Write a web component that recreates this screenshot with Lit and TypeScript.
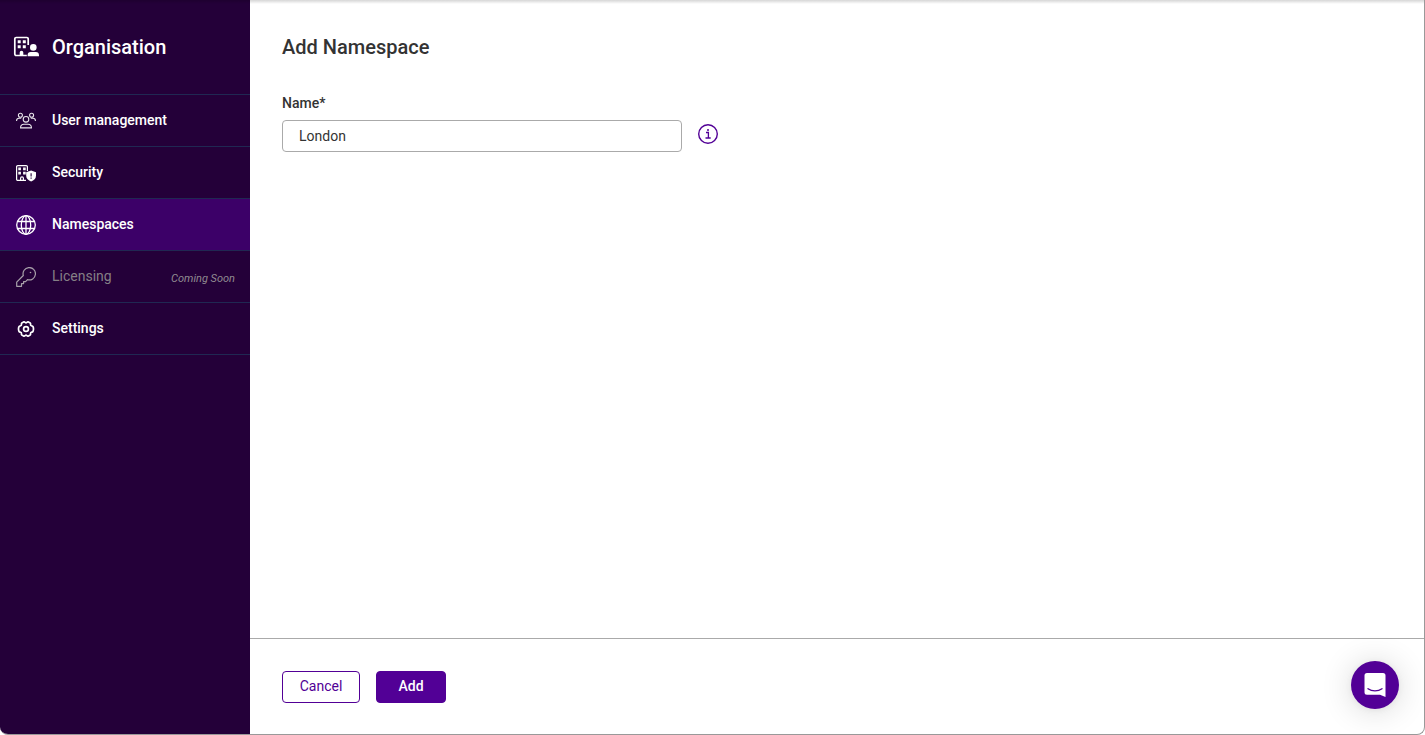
import { LitElement, html, css, svg, nothing } from "lit";
import { customElement, state } from "lit/decorators.js";
import { classMap } from "lit/directives/class-map.js";

const icons = {
  organisation: svg`
    <path d="M8 20.5H3.2a1.4 1.4 0 0 1-1.400-1.400V3.900a1.400 1.400 0 0 1 1.400-1.400h10.600a1.400 1.400 0 0 1 1.400 1.400V10M13.800 20.500H8" fill="none" stroke="currentColor" stroke-width="1.700"/>
    <path d="M4.700 5.200h3v3h-3zM9.800 5.200h3v3h-3zM4.700 10.200h3v3h-3zM9.800 10.200h3v3h-3zM6.700 20.500v-3a1.800 1.800 0 0 1 3.600 0v3z" fill="currentColor"/>
    <circle cx="20.300" cy="12.400" r="3.300" fill="currentColor"/>
    <path d="M14.600 21.300v-1.100a3.200 3.200 0 0 1 3.200-3.100h5a3.200 3.200 0 0 1 3.200 3.100v1.100z" fill="currentColor"/>`,
  users: svg`
    <g fill="none" stroke="currentColor" stroke-width="1.100" opacity="0.9">
      <circle cx="4.400" cy="4.200" r="2"/><circle cx="15.600" cy="4.200" r="2"/>
      <circle cx="10" cy="8.300" r="2.800"/>
      <path d="M.6 10V9.500a2.300 2.300 0 0 1 2.300-2.200h2.300M19.400 10V9.500a2.300 2.300 0 0 0-2.300-2.200h-2.300"/>
      <path d="M4.600 16.900v-.6a3.300 3.300 0 0 1 3.300-3.100h4.200a3.300 3.300 0 0 1 3.300 3.100v.6z"/>
    </g>`,
  security: svg`
    <g fill="none" stroke="currentColor" stroke-width="1.200">
      <path d="M10 17.400H1.800A1.200 1.200 0 0 1 .6 16.200V3.800A1.200 1.200 0 0 1 1.800 2.600h8.400a1.200 1.200 0 0 1 1.200 1.200V8"/>
      <path d="M2.900 5.200h1.400v1.400H2.900zM7.700 5.200h1.400v1.400H7.700zM2.900 9.400h1.400v1.400H2.900zM7.700 9.400h1.400v1.400H7.700zM4.600 17.400v-2.200a1.400 1.400 0 0 1 2.800 0v2.200"/>
    </g>
    <path d="M15.100 7.600l4.900 1.600v3.500c0 2.700-2 4.600-4.900 5.800-2.900-1.200-4.900-3.100-4.900-5.800V9.200z" fill="currentColor"/>
    <path d="M15.100 10.200v3.400M15.100 14.600v1.200" stroke="#240039" stroke-width="1.100"/>`,
  globe: svg`
    <g fill="none" stroke="currentColor" stroke-width="1.300">
      <circle cx="10" cy="10" r="9.300"/><ellipse cx="10" cy="10" rx="4.700" ry="9.300"/>
      <path d="M10 .7v18.600"/>
      <path d="M1.400 6.500h17.200M1.400 13.500h17.200"/>
    </g>`,
  key: svg`
    <path d="M.7 19.300v-4.200L7.300 8.500A6.200 6.200 0 1 1 11.500 12.700L9.600 14.600H7.600v2H5.500v2.700z" fill="none" stroke="currentColor" stroke-width="1.200" stroke-linejoin="round"/>
    <circle cx="14.500" cy="5.500" r=".8" fill="currentColor"/>`,
  gear: svg`
    <path d="M8 2.800Q8.700 2.800 9.200 3.500Q10 4.300 10.800 3.500Q11.300 2.800 12 2.800L14.200 3.900Q14.800 4.300 14.500 5.200Q14.300 6.600 15.700 6.900Q16.700 7 17 7.700Q17.500 8.800 17.500 10Q17.500 11.200 17 12.300Q16.700 13 15.700 13.100Q14.300 13.400 14.500 14.800Q14.800 15.700 14.200 16.100L12 17.200Q11.300 17.200 10.800 16.500Q10 15.700 9.200 16.500Q8.700 17.200 8 17.200L5.800 16.100Q5.200 15.700 5.500 14.800Q5.700 13.400 4.300 13.100Q3.300 13 3 12.300Q2.500 11.200 2.500 10Q2.500 8.800 3 7.700Q3.300 7 4.300 6.900Q5.700 6.600 5.500 5.200Q5.200 4.300 5.800 3.900Z" fill="none" stroke="currentColor" stroke-width="1.700" stroke-linejoin="round"/>
    <circle cx="10" cy="10" r="2.400" fill="none" stroke="currentColor" stroke-width="1.700"/>`,
};

type NavItem = { label: string; icon: keyof typeof icons; active?: boolean; note?: string };

const navItems: NavItem[] = [
  { label: "User management", icon: "users" },
  { label: "Security", icon: "security" },
  { label: "Namespaces", icon: "globe", active: true },
  { label: "Licensing", icon: "key", note: "Coming Soon" },
  { label: "Settings", icon: "gear" },
];

@customElement("app-sidebar")
export class AppSidebar extends LitElement {
  static styles = css`
    :host {
      display: block;
      background: #240039;
      color: #fff;
    }
    .brand {
      display: flex;
      align-items: center;
      gap: 11px;
      height: 94px;
      padding-left: 13px;
      box-sizing: border-box;
    }
    .brand svg { width: 28px; height: 24px; }
    .brand h2 { margin: 0; font-size: 20px; line-height: 24px; font-weight: 500; }
    ul { list-style: none; margin: 0; padding: 0; border-bottom: 1px solid #202852; }
    .item {
      display: flex;
      align-items: center;
      gap: 16px;
      height: 52px;
      box-sizing: border-box;
      border-top: 1px solid #202852;
      padding: 0 15px 2px 16px;
      color: #fff;
      font-size: 14px;
      line-height: 20px;
      font-weight: 500;
      text-decoration: none;
    }
    .item svg { width: 20px; height: 20px; margin-top: 2px; }
    .active { background: #3c0068; }
    .disabled { color: #857f85; font-weight: 400; }
    .disabled svg { color: #a8a0aa; }
    .note { margin: 6px 0 0 auto; font-size: 11px; font-style: italic; color: #918b91; }
  `;

  render() {
    return html`
      <header class="brand">
        <svg viewBox="0 0 28 24" aria-hidden="true">${icons.organisation}</svg>
        <h2>Organisation</h2>
      </header>
      <nav aria-label="Organisation">
        <ul>
          ${navItems.map(
            (item) => html`<li>
              <a
                class=${classMap({ item: true, active: !!item.active, disabled: !!item.note })}
                href="#"
                aria-current=${item.active ? "page" : nothing}
                aria-disabled=${item.note ? "true" : nothing}
              >
                <svg viewBox="0 0 20 20" aria-hidden="true">${icons[item.icon]}</svg>
                <span>${item.label}</span>
                ${item.note ? html`<span class="note">${item.note}</span>` : nothing}
              </a>
            </li>`
          )}
        </ul>
      </nav>
    `;
  }
}

@customElement("app-root")
export class AppRoot extends LitElement {
  @state() private name = "London";

  static styles = css`
    :host {
      display: grid;
      grid-template-columns: 250px 1fr;
      position: relative;
      min-height: 100vh;
      box-sizing: border-box;
      border: solid #999;
      border-width: 0 1px 1px 0;
      border-radius: 0 0 8px 8px;
      overflow: hidden;
      background: #fff;
      color: #333;
      font-family: Roboto, "Liberation Sans", sans-serif;
      font-size: 14px;
      line-height: 20px;
    }
    .shade {
      position: absolute;
      inset: 0 0 auto 0;
      height: 4px;
      background: linear-gradient(rgba(0, 0, 0, 0.16), rgba(0, 0, 0, 0));
    }
    .page { display: flex; flex-direction: column; }
    .body { flex: 1; padding: 35px 32px; }
    h1 { margin: 0 0 34px; font-size: 20px; line-height: 24px; font-weight: 500; }
    label { display: block; margin-bottom: 7px; font-weight: 500; }
    .field { display: flex; align-items: center; gap: 16px; }
    input {
      width: 400px;
      height: 32px;
      box-sizing: border-box;
      padding: 0 16px;
      border: 1px solid #aaa;
      border-radius: 4px;
      background: #fff;
      color: #333;
      font: inherit;
    }
    button { font: inherit; cursor: pointer; }
    .info {
      display: flex;
      margin-bottom: 4px;
      padding: 0;
      border: 0;
      background: none;
      color: #520096;
    }
    .info svg { width: 20px; height: 20px; }
    .actions {
      display: flex;
      gap: 16px;
      padding: 32px 32px 31px;
      border-top: 1px solid #aaa;
    }
    .btn {
      height: 32px;
      padding: 0 16px 2px;
      border: 1px solid #520096;
      border-radius: 4px;
      background: #fff;
      color: #520096;
    }
    .cancel { min-width: 78px; }
    .primary { min-width: 70px; background: #520096; color: #fff; font-weight: 500; }
    .chat {
      position: absolute;
      right: 25px;
      bottom: 25px;
      display: grid;
      place-items: center;
      width: 48px;
      height: 48px;
      padding: 0;
      border: 0;
      border-radius: 50%;
      background: #520096;
      color: #fff;
      box-shadow: 0 1px 6px rgba(0, 0, 0, 0.06), 0 2px 32px rgba(0, 0, 0, 0.16);
    }
    .chat svg { width: 24px; height: 26px; }
  `;

  private onInput(event: Event) {
    this.name = (event.target as HTMLInputElement).value;
  }

  render() {
    return html`
      <app-sidebar></app-sidebar>
      <main class="page">
        <section class="body">
          <h1>Add Namespace</h1>
          <label for="name">Name*</label>
          <div class="field">
            <input id="name" type="text" required .value=${this.name} @input=${this.onInput} />
            <button class="info" type="button" aria-label="About the name">
              <svg viewBox="0 0 20 20" aria-hidden="true">
                <circle cx="10" cy="10" r="9.300" fill="none" stroke="currentColor" stroke-width="1.400" />
                <path d="M8 8.500h2.400v5.200M7.500 14h5.200" fill="none" stroke="currentColor" stroke-width="1.300" />
                <circle cx="10" cy="5.900" r="1" fill="currentColor" />
              </svg>
            </button>
          </div>
        </section>
        <footer class="actions">
          <button class="btn cancel" type="button">Cancel</button>
          <button class="btn primary" type="submit">Add</button>
        </footer>
      </main>
      <div class="shade"></div>
      <button class="chat" type="button" aria-label="Open chat">
        <svg viewBox="0 0 24 26" aria-hidden="true">
          <path d="M4 1h16a2.500 2.500 0 0 1 2.500 2.500V25l-5.500-2.300H4A2.500 2.500 0 0 1 1.500 20.200V3.500A2.500 2.500 0 0 1 4 1z" fill="currentColor" />
          <path d="M5 16.700c4 3 10 3 14 0" fill="none" stroke="#520096" stroke-width="1.300" stroke-linecap="round" />
        </svg>
      </button>
    `;
  }
}
